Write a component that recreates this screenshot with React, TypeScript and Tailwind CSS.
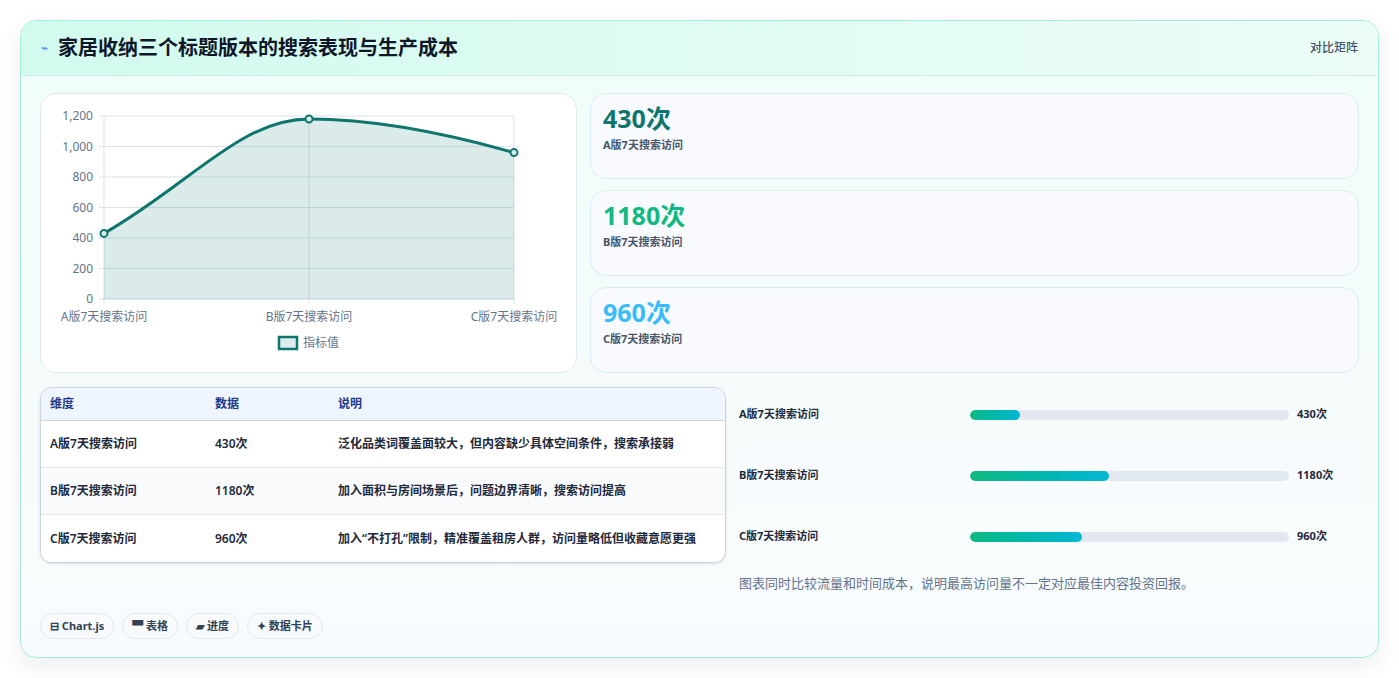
import React from "react";

const F = { fontFamily: '"Noto Sans", "Noto Sans CJK SC", sans-serif' };

function Chart() {
  const ys = [0, 200, 400, 600, 800, 1000, 1200];
  const y = (v: number) => 205 - (v / 1200) * 183;
  const pts = [
    [63, y(430)],
    [268, y(1180)],
    [473, y(960)],
  ];
  const d = `M${pts[0][0]},${pts[0][1]} C150,${pts[0][1] - 50} 200,${pts[1][1]} ${pts[1][0]},${pts[1][1]} C340,${pts[1][1]} 420,${pts[2][1] - 15} ${pts[2][0]},${pts[2][1]}`;
  return (
    <svg width="536" height="279" className="block" style={F}>
      {ys.map((v) => (
        <g key={v}>
          <line x1="58" x2="473" y1={y(v)} y2={y(v)} stroke={v === 0 ? "#cbd5e1" : "#dbe3ec"} />
          <text x="52" y={y(v) + 4} textAnchor="end" fontSize="12" fill="#64748b">
            {v.toLocaleString("en-US")}
          </text>
        </g>
      ))}
      {[63, 268, 473].map((x) => (
        <line key={x} x1={x} x2={x} y1={y(1200)} y2={210} stroke="#dbe3ec" />
      ))}
      <path d={`${d} L473,${y(0)} L63,${y(0)} Z`} fill="#0f766e" fillOpacity="0.15" />
      <path d={d} fill="none" stroke="#0f766e" strokeWidth="3" />
      {pts.map(([x, yy], i) => (
        <circle key={i} cx={x} cy={yy} r="3.5" fill="#dceae9" stroke="#0f766e" strokeWidth="2" />
      ))}
      {[
        [63, "A版7天搜索访问"],
        [268, "B版7天搜索访问"],
        [473, "C版7天搜索访问"],
      ].map(([x, t]) => (
        <text key={t as string} x={x as number} y="227" textAnchor="middle" fontSize="12" fill="#64748b">
          {t}
        </text>
      ))}
      <rect x="238" y="243" width="18" height="12" fill="#dceae9" stroke="#0f766e" strokeWidth="2.5" />
      <text x="262" y="253" fontSize="12" fill="#64748b">指标值</text>
    </svg>
  );
}

const stats = [
  ["430次", "A版7天搜索访问", "text-[#0f766e]"],
  ["1180次", "B版7天搜索访问", "text-[#10b981]"],
  ["960次", "C版7天搜索访问", "text-[#38bdf8]"],
];

const rows = [
  ["A版7天搜索访问", "430次", "泛化品类词覆盖面较大，但内容缺少具体空间条件，搜索承接弱"],
  ["B版7天搜索访问", "1180次", "加入面积与房间场景后，问题边界清晰，搜索访问提高"],
  ["C版7天搜索访问", "960次", "加入“不打孔”限制，精准覆盖租房人群，访问量略低但收藏意愿更强"],
];

const bars = [
  ["A版7天搜索访问", 15.7, "430次"],
  ["B版7天搜索访问", 43.6, "1180次"],
  ["C版7天搜索访问", 35, "960次"],
];

export default function App() {
  return (
    <div className="w-[1399px] h-[678px] bg-white pt-5 px-5" style={F}>
      <div className="w-[1359px] h-[638px] rounded-2xl border border-[#a7ecdc] bg-gradient-to-b from-[#f0fdf8] to-[#f8fbfd] shadow-[0_8px_24px_rgba(15,23,42,0.08)] overflow-hidden">
        <div className="h-[55px] flex items-center justify-between pl-[20px] pr-[20px] bg-gradient-to-r from-[#d2faee] to-[#ecfdf7] border-b border-[#cdeee5]">
          <div className="flex items-center gap-[10px]">
            <span className="text-[#3b82f6] text-[12px]">⌁</span>
            <span className="text-[20px] font-bold text-[#0f172a]">家居收纳三个标题版本的搜索表现与生产成本</span>
          </div>
          <span className="text-[12px] text-[#475569] font-medium">对比矩阵</span>
        </div>
        <div className="px-[19px] pt-[17px]">
          <div className="flex gap-[13px]">
            <div className="w-[537px] h-[280px] rounded-2xl border border-[#e2e8f0] bg-white">
              <Chart />
            </div>
            <div className="flex-1 flex flex-col gap-[11px]">
              {stats.map(([v, l, c]) => (
                <div key={l} className="h-[86px] rounded-2xl border border-[#d6eef0] bg-[#f8fafe] px-[12px] pt-[8px]">
                  <div className={`text-[25px] font-bold leading-[32px] ${c}`}>{v}</div>
                  <div className="text-[11px] font-bold text-[#475569] mt-[3px]">{l}</div>
                </div>
              ))}
            </div>
          </div>
          <div className="flex gap-[13px] mt-[14px]">
            <div className="w-[686px] shrink-0">
              <div className="rounded-xl border border-[#cbd5e1] overflow-hidden bg-white shadow-sm">
                <div className="flex h-[33px] items-center bg-[#eef5fe] border-b border-[#cbd5e1] text-[12px] font-bold text-[#1e3a8a]">
                  <div className="w-[174px] pl-[9px]">维度</div>
                  <div className="w-[123px]">数据</div>
                  <div>说明</div>
                </div>
                {rows.map((r, i) => (
                  <div key={i} className={`flex h-[47px] items-center text-[12px] font-semibold text-[#1e293b] ${i < 2 ? "border-b border-[#e2e8f0]" : ""} ${i === 1 ? "bg-[#f8fafc]" : "bg-white"}`}>
                    <div className="w-[174px] pl-[9px]">{r[0]}</div>
                    <div className="w-[123px]">{r[1]}</div>
                    <div>{r[2]}</div>
                  </div>
                ))}
              </div>
              <div className="flex gap-[8px] mt-[50px]">
                {["⊟ Chart.js", "▀ 表格", "▰ 进度", "✦ 数据卡片"].map((t) => (
                  <span key={t} className="h-[26px] px-[9px] flex items-center rounded-full border border-[#e2e8f0] bg-[#f8fafc] text-[11px] font-bold text-[#334155]">
                    {t}
                  </span>
                ))}
              </div>
            </div>
            <div className="flex-1 -mt-[3px]">
              <div className="flex flex-col">
                {bars.map(([l, p, v], i) => (
                  <div key={l as string} className={`h-[61px] flex items-center ${i === 1 ? "bg-[#f8fbfd]" : ""}`}>
                    <div className="w-[231px] text-[11px] font-bold text-[#1e293b]">{l}</div>
                    <div className="w-[319px] h-[10px] rounded-full bg-[#e2e8f0] overflow-hidden">
                      <div className="h-full rounded-full bg-gradient-to-r from-[#10b981] to-[#06b6d4]" style={{ width: `${p}%` }} />
                    </div>
                    <div className="ml-[8px] text-[11px] font-bold text-[#1e293b]">{v}</div>
                  </div>
                ))}
              </div>
              <div className="mt-[7px] text-[13px] text-[#64748b]">图表同时比较流量和时间成本，说明最高访问量不一定对应最佳内容投资回报。</div>
            </div>
          </div>
        </div>
      </div>
    </div>
  );
}
